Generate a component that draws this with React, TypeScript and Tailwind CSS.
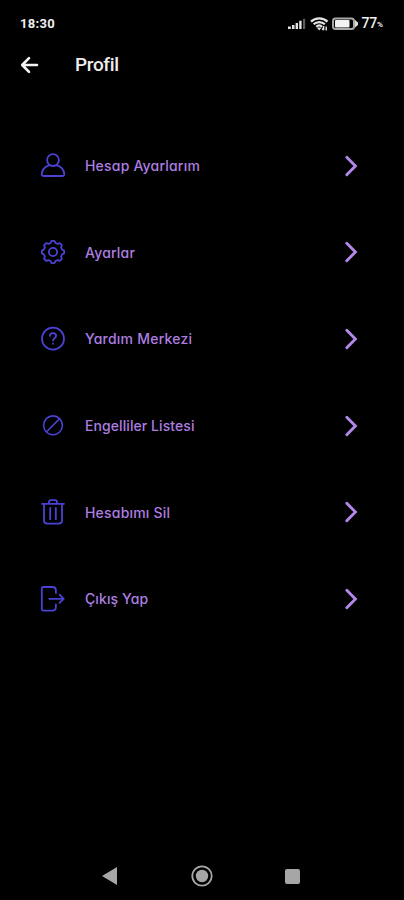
import type { ReactNode } from 'react';

const icon = (children: ReactNode) => (
  <svg viewBox="0 0 28 28" className="h-7 w-7 shrink-0" fill="none" stroke="#4a42d4" strokeWidth="1.8" strokeLinecap="round" strokeLinejoin="round">
    {children}
  </svg>
);

const rows = [
  {
    label: 'Hesap Ayarlarım',
    spacing: 'tracking-[0.2px]',
    icon: icon(
      <>
        <circle cx="14" cy="8.1" r="5.9" />
        <path d="M10.6 13.2C6.2 14.5 3.1 17.8 2.7 22.1C2.6 23.4 3.4 24 4.8 24H23.2C24.6 24 25.4 23.4 25.3 22.1C24.9 17.8 21.8 14.5 17.4 13.2" />
      </>,
    ),
  },
  {
    label: 'Ayarlar',
    spacing: 'tracking-[0.2px]',
    icon: icon(
      <>
        <path d="M11.5 5L12.6 2.9H15.4L16.5 5L18.6 5.9L20.8 5.1L22.9 7.2L22.1 9.4L23 11.5L25.1 12.6V15.4L23 16.5L22.1 18.6L22.9 20.8L20.8 22.9L18.6 22.1L16.5 23L15.4 25.1H12.6L11.5 23L9.4 22.1L7.2 22.9L5.1 20.8L5.9 18.6L5 16.5L2.9 15.4V12.6L5 11.5L5.9 9.4L5.1 7.2L7.2 5.1L9.4 5.9Z" />
        <circle cx="14" cy="14" r="4.1" />
      </>,
    ),
  },
  {
    label: 'Yardım Merkezi',
    spacing: 'tracking-[0.22px]',
    icon: icon(
      <>
        <circle cx="14" cy="13.7" r="11" />
        <path d="M11 10.9C11 9.2 12.2 8.2 14 8.2C15.8 8.2 17.1 9.3 17.1 10.9C17.1 13.2 14 13.2 14 15.6M14 18.6V18.8" />
      </>,
    ),
  },
  {
    label: 'Engelliler Listesi',
    spacing: 'tracking-[0.08px]',
    icon: icon(
      <>
        <circle cx="14" cy="13.3" r="9.4" strokeWidth="1.6" />
        <path d="M7.6 19.7L20.4 6.9" strokeWidth="1.6" />
      </>,
    ),
  },
  {
    label: 'Hesabımı Sil',
    spacing: 'tracking-[0.2px]',
    icon: icon(
      <>
        <path d="M3 5.8H25M10 5.5V3.9C10 2.8 10.8 2.2 11.8 2.2H16.2C17.2 2.2 18 2.8 18 3.9V5.5M5 6V22.6C5 24.8 6.3 25.6 8.2 25.6H19.8C21.7 25.6 23 24.8 23 22.6V6M11.2 10V21.2M16.8 10V21.2" />
      </>,
    ),
  },
  {
    label: 'Çıkış Yap',
    spacing: 'tracking-[0.1px]',
    icon: icon(
      <>
        <path d="M16.9 8V5.5C16.9 3.3 15.5 2 13.3 2H4.4C3.4 2 2.8 2.7 2.8 3.7V23.8C2.8 24.9 3.4 25.6 4.4 25.6H13.3C15.5 25.6 16.9 24.3 16.9 22.1V19.5" />
        <path d="M10.2 13.8H24.6M20.6 9.7L24.7 13.8L20.6 17.9" />
      </>,
    ),
  },
];

export default function App() {
  return (
    <div className="flex h-[900px] w-[404px] flex-col overflow-hidden bg-black font-['Roboto',sans-serif] text-[#eeeeee]">
      <header className="flex h-[47px] shrink-0 items-center pl-5 pr-[19px] text-[13px] font-bold">
        <span className="tracking-[0.3px]">18:30</span>
        <svg className="ml-auto h-4 w-[19px]" viewBox="0 0 19 16" fill="#e4e4e4">
          <path d="M0 10.5H2.8V13H0zM4 9H6.5V13H4zM7.6 7H10V13H7.6zM11.2 4.8H13.6V13H11.2z" />
          <path d="M15 2.8H17.2V13H15z" fill="#5c5c5c" />
        </svg>
        <svg className="ml-[3px] h-[18px] w-[19px]" viewBox="0 0 19 18" fill="none" stroke="#e4e4e4" strokeWidth="2.2">
          <path d="M1 6.6C5.5 2.2 13 2.2 17.5 6.6M3.6 9.3C6.8 6.3 11.7 6.3 14.9 9.3M6.2 11.8C8 10.2 10.4 10.2 12.2 11.8" />
          <path d="M6.8 12.4L9.2 15.6L11.6 12.4Z" fill="#e4e4e4" stroke="none" />
          <path d="M13.6 11V15M12.1 13.6L13.6 15.2M16.2 15.6V11.5" strokeWidth="1.4" />
        </svg>
        <svg className="ml-[3px] h-[14px] w-[27px]" viewBox="0 0 27 14" fill="none">
          <rect x="1" y="1.5" width="21" height="10.5" rx="2.5" stroke="#a8a8a8" strokeWidth="2" />
          <rect x="3" y="3" width="14.5" height="7.5" rx="1" fill="#f2f2f2" />
          <path d="M23 3L26 5.5V8L23 10.5Z" fill="#dddddd" />
        </svg>
        <span className="ml-[2px] text-[14px] font-medium tracking-[-0.2px]">77</span>
        <span className="mt-[3px] w-[8px] text-[8px]">%</span>
      </header>
      <div className="flex h-[35px] shrink-0 items-center pl-5">
        <svg className="h-[18px] w-[19px]" viewBox="0 0 19 18" fill="none" stroke="#f4f4f4" strokeWidth="2.6" strokeLinecap="round" strokeLinejoin="round">
          <path d="M17 9H2.4M9 2.2L2.2 9L9 15.8" />
        </svg>
        <h1 className="ml-[36px] text-[19px] font-medium leading-6 tracking-[-0.35px]">Profil</h1>
      </div>
      <main className="mt-[40.5px] flex flex-col">
        {rows.map((row) => (
          <button key={row.label} className="flex h-[86.6px] shrink-0 items-center pl-[39px] pr-[44px] text-left">
            {row.icon}
            <span className={`ml-[18px] whitespace-nowrap font-['Inter',sans-serif] text-[14px] font-medium text-[#ad7ee0] [font-feature-settings:'cv11'] ${row.spacing}`}>
              {row.label}
            </span>
            <svg className="ml-auto h-6 w-4" viewBox="0 0 16 24" fill="none" stroke="#b387e8" strokeWidth="2.9" strokeLinecap="round" strokeLinejoin="miter">
              <path d="M2.8 3.2L11.4 12L2.8 20.8" />
            </svg>
          </button>
        ))}
      </main>
      <nav className="mt-auto flex h-[48px] shrink-0 items-center justify-between pl-[101px] pr-[104px]">
        <svg className="h-[18px] w-[17px]" viewBox="0 0 17 18" fill="#a6a6a6"><path d="M1 9L16 0V18Z" /></svg>
        <svg className="h-[22px] w-[22px]" viewBox="0 0 22 22"><circle cx="11" cy="11" r="9.7" fill="none" stroke="#a6a6a6" strokeWidth="1.8" /><circle cx="11" cy="11" r="6.2" fill="#a6a6a6" /></svg>
        <div className="h-[15px] w-[15px] rounded-[2px] bg-[#a6a6a6]" />
      </nav>
    </div>
  );
}
